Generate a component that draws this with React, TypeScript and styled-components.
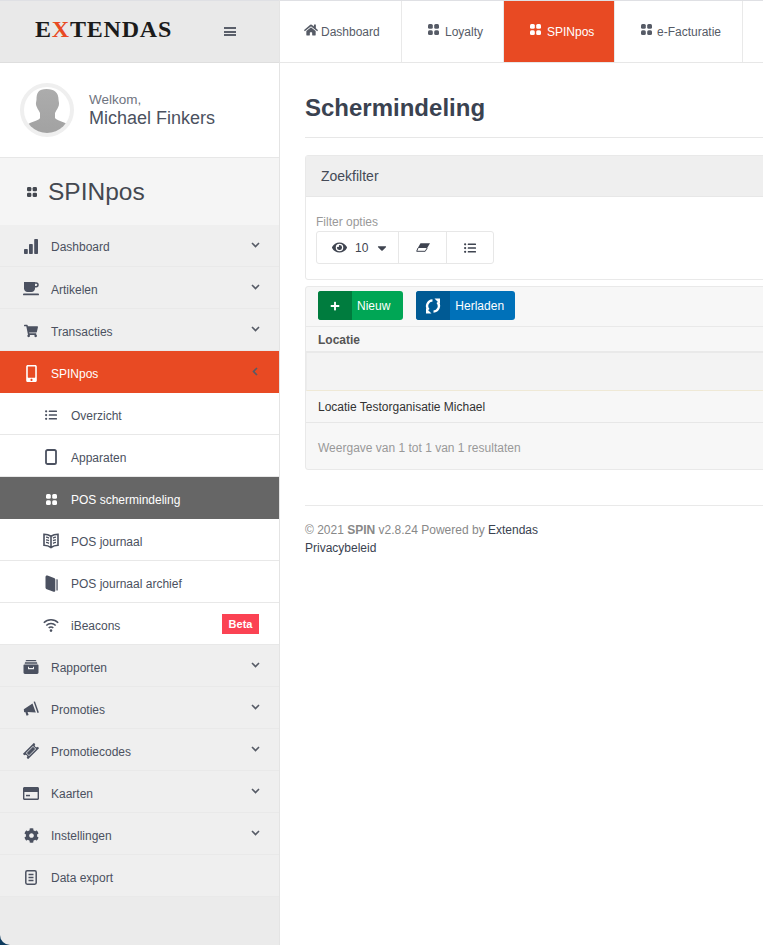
import React from "react";
import styled, { createGlobalStyle } from "styled-components";
import {
  FaHome,
  FaShoppingCart,
  FaMobileAlt,
  FaListUl,
  FaCog,
  FaEye,
  FaPlus,
  FaCaretDown,
} from "react-icons/fa";

const GlobalStyle = createGlobalStyle`
  html, body {
    margin: 0;
    padding: 0;
    background: #fff;
    overflow: hidden;
  }
  * { box-sizing: border-box; }
  body {
    font-family: "Liberation Sans", Arial, sans-serif;
    font-size: 12px;
    color: #4b5160;
  }
`;

const Page = styled.div`
  width: 763px;
  height: 945px;
  display: grid;
  grid-template-columns: 280px 1fr;
  overflow: hidden;
  background: #fff;
`;

const SideCorner = styled.div`
  background: #0d3b5e;
  height: 945px;
`;

const Side = styled.aside`
  height: 945px;
  background: #ebebeb;
  border-right: 1px solid #e4e4e4;
  border-bottom-left-radius: 10px;
  overflow: hidden;
`;

const Brand = styled.div`
  height: 63px;
  padding: 1px 0 0 35px;
  display: flex;
  align-items: center;
  background: #e9e9e9;
  border-top: 1px solid #dfe0e4;
  border-bottom: 1px solid #dedede;
`;

const Logo = styled.span`
  font-family: "Liberation Serif", serif;
  font-weight: 700;
  font-size: 24px;
  letter-spacing: 0.8px;
  color: #1b1b1b;
  width: 189px;
  margin-top: -6px;
  b { color: #e84a23; font-weight: 700; }
`;

const Burger = styled.span`
  display: block;
  width: 12px;
  height: 9px;
  margin-top: -1px;
  border-top: 2px solid #5a5f6a;
  border-bottom: 2px solid #5a5f6a;
  position: relative;
  &::after {
    content: "";
    position: absolute;
    left: 0;
    right: 0;
    top: 1.5px;
    height: 2px;
    background: #5a5f6a;
  }
`;

const Profile = styled.div`
  height: 95px;
  background: #fff;
  border-bottom: 1px solid #e7e7e7;
  padding: 20px 0 0 20px;
  display: flex;
  gap: 15px;
`;

const Avatar = styled.div`
  width: 54px;
  height: 54px;
  border-radius: 50%;
  border: 4px solid #efefef;
  background: #fff;
  overflow: hidden;
  svg { display: block; }
`;

const Greeting = styled.div`
  padding-top: 9px;
  font-size: 13.5px;
  line-height: 15px;
  color: #6f7480;
  strong {
    display: block;
    font-weight: 400;
    font-size: 18px;
    line-height: 22px;
    color: #4b5160;
  }
`;

const SectionTitle = styled.div`
  height: 67px;
  background: #f5f5f5;
  display: flex;
  align-items: center;
  gap: 11px;
  padding-left: 27px;
  font-size: 24.5px;
  color: #444850;
`;

const Menu = styled.nav`
  display: flex;
  flex-direction: column;
`;

type RowKind = "main" | "open" | "sub" | "current";

const rowBg: Record<RowKind, string> = {
  main: "#efefef",
  open: "#e84a23",
  sub: "#fff",
  current: "#666",
};

const Row = styled.div<{ $kind: RowKind }>`
  height: 42px;
  display: flex;
  align-items: center;
  padding-top: 4px;
  padding-left: ${(p) => (p.$kind === "main" || p.$kind === "open" ? "21px" : "41px")};
  padding-right: 19px;
  background: ${(p) => rowBg[p.$kind]};
  color: ${(p) => (p.$kind === "open" || p.$kind === "current" ? "#fff" : "#4b5160")};
  border-bottom: 1px solid ${(p) => (p.$kind === "main" ? "#e9e9e9" : p.$kind === "sub" ? "#e8e8e8" : "transparent")};
  &:first-child { padding-top: 3px; }
`;

const RowIcon = styled.span`
  width: 20px;
  margin-right: 10px;
  margin-top: -1px;
  flex: none;
  display: flex;
  align-items: center;
  justify-content: center;
  svg { display: block; }
`;

const RowLabel = styled.span`
  flex: 1;
`;

const Chevron = styled.svg`
  width: 9px;
  height: 6px;
  margin-top: -5px;
  fill: none;
  stroke: #565b66;
  stroke-width: 1.6;
`;

const ChevronLeft = styled.svg`
  width: 6px;
  height: 9px;
  margin: -4px 2px 0 0;
  fill: none;
  stroke: #565b66;
  stroke-width: 1.6;
`;

const Badge = styled.span`
  width: 37px;
  height: 20px;
  margin: -3px 1px 0 0;
  background: #fb4253;
  color: #fff;
  font-weight: 700;
  font-size: 11px;
  display: flex;
  align-items: center;
  justify-content: center;
`;

const Main = styled.main`
  min-width: 0;
`;

const TopBar = styled.div`
  height: 63px;
  display: flex;
  background: #fff;
  border-top: 1px solid #dfe0e4;
  border-bottom: 1px solid #e7e7e7;
`;

const Tab = styled.div<{ $active?: boolean; $width: number; $inset: number; $gap: number }>`
  width: ${(p) => p.$width}px;
  padding-left: ${(p) => p.$inset}px;
  flex: none;
  display: flex;
  align-items: center;
  gap: ${(p) => p.$gap}px;
  background: ${(p) => (p.$active ? "#e84a23" : "#fff")};
  color: ${(p) => (p.$active ? "#fff" : "#565b66")};
  border-right: 1px solid #e9e9e9;
  svg { display: block; margin-top: -4px; }
`;

const Content = styled.div`
  padding-left: 25px;
`;

const PageTitle = styled.h1`
  margin: 0;
  height: 75px;
  padding-top: 31px;
  font-size: 24px;
  line-height: 28px;
  font-weight: 700;
  color: #3a4250;
  border-bottom: 1px solid #e7e7e7;
`;

const FilterPanel = styled.section`
  width: 520px;
  height: 125px;
  margin-top: 17px;
  border: 1px solid #e9e9e9;
  border-radius: 3px;
`;

const PanelHead = styled.div`
  height: 41px;
  padding-left: 15px;
  display: flex;
  align-items: center;
  background: #efefef;
  border-bottom: 1px solid #e7e7e7;
  font-size: 14px;
  color: #444a56;
`;

const FilterBody = styled.div`
  padding: 18px 10px 0;
`;

const FieldLabel = styled.div`
  font-size: 12px;
  line-height: 14px;
  margin-bottom: 2px;
  color: #999;
`;

const ButtonGroup = styled.div`
  display: inline-flex;
  height: 33px;
  border: 1px solid #e7e7e7;
  border-radius: 3px;
`;

const GroupButton = styled.div<{ $width: number }>`
  width: ${(p) => p.$width}px;
  display: flex;
  align-items: center;
  justify-content: center;
  gap: 7px;
  font-size: 12px;
  color: #3f4450;
  & + & { border-left: 1px solid #e7e7e7; }
`;

const SizeButton = styled(GroupButton)`
  justify-content: flex-start;
  gap: 8px;
  padding: 1px 0 0 15px;
  svg:first-child { margin-top: -2px; }
  svg:last-child { margin-left: -1px; }
`;

const TablePanel = styled.section`
  width: 520px;
  height: 184px;
  margin-top: 6px;
  background: #f7f7f7;
  border: 1px solid #e9e9e9;
  border-radius: 3px;
`;

const Toolbar = styled.div`
  height: 40px;
  padding: 4px 12px 0;
  display: flex;
  gap: 13px;
  align-items: flex-start;
  border-bottom: 1px solid #e9e9e9;
`;

const ActionButton = styled.div<{ $dark: string; $light: string; $pad: number }>`
  height: 29px;
  display: flex;
  border-radius: 3px;
  overflow: hidden;
  background: ${(p) => p.$light};
  color: #fff;
  font-size: 12px;
  align-items: center;
  padding-right: ${(p) => p.$pad}px;
  gap: 5px;
  > i {
    width: 34px;
    height: 100%;
    display: flex;
    align-items: center;
    justify-content: center;
    background: ${(p) => p.$dark};
  }
`;

const HeadRow = styled.div`
  height: 26px;
  padding: 2px 0 0 12px;
  display: flex;
  align-items: center;
  font-weight: 700;
  color: #555;
  border-bottom: 2px solid #e9e9e9;
`;

const FilterRow = styled.div`
  height: 38px;
  background: #f3f3f3;
  border-left: 1px solid #ececec;
  border-bottom: 1px solid #efe9d6;
`;

const DataRow = styled.div`
  height: 32px;
  padding-left: 12px;
  display: flex;
  align-items: center;
  color: #333;
  border-bottom: 1px solid #e7e7e7;
`;

const ResultCount = styled.div`
  height: 46px;
  padding: 3px 0 0 12px;
  display: flex;
  align-items: center;
  color: #999;
`;

const Footer = styled.footer`
  margin-top: 35px;
  padding-top: 16px;
  border-top: 1px solid #e9e9e9;
  line-height: 17.5px;
  color: #888;
  b { color: #888; }
  span { color: #3a4250; }
`;

const GridIcon = ({ size = 11 }: { size?: number }) => (
  <svg width={size} height={size} viewBox="0 0 11 11" fill="currentColor">
    <rect x="0" y="0" width="4.8" height="4.8" rx="1.5" />
    <rect x="6.2" y="0" width="4.8" height="4.8" rx="1.5" />
    <rect x="0" y="6.2" width="4.8" height="4.8" rx="1.5" />
    <rect x="6.2" y="6.2" width="4.8" height="4.8" rx="1.5" />
  </svg>
);

const BarsIcon = () => (
  <svg width="14" height="15" viewBox="0 0 14 15" fill="currentColor">
    <rect x="0" y="10" width="3.8" height="5" rx="0.8" />
    <rect x="5" y="5" width="3.8" height="10" rx="0.8" />
    <rect x="10.2" y="0" width="3.8" height="15" rx="0.8" />
  </svg>
);

const CupIcon = () => (
  <svg width="16" height="14" viewBox="0 0 16 14" fill="currentColor">
    <path d="M1 0h11v6.500C12 8.400 10.400 10 8.500 10h-4C2.600 10 1 8.400 1 6.500z" />
    <path fill="none" stroke="currentColor" strokeWidth="1.500" d="M12 1h1.200c1 0 1.800.8 1.800 1.800s-.8 1.900-1.800 1.900H12" />
    <rect x="0" y="11.500" width="16" height="1.800" rx="0.9" />
  </svg>
);

const TabletIcon = () => (
  <svg width="12" height="16" viewBox="0 0 12 16" fill="none" stroke="currentColor" strokeWidth="1.8">
    <rect x="1" y="1" width="10" height="14" rx="1.6" />
  </svg>
);

const OpenBookIcon = () => (
  <svg width="16" height="16" viewBox="0 0 16 16" fill="none" stroke="currentColor" strokeWidth="1.3">
    <path strokeWidth="1.6" d="M8 3.2C6 2 3.5 1.4 1 1.3v11c2.5.1 5 .8 7 2.2 2-1.4 4.5-2.1 7-2.2v-11C12.500 1.400 10 2 8 3.200zM8 3.200v11.300" />
    <path d="M3 4.200c1 .1 2 .4 3 .9M3 6.800c1 .1 2 .4 3 .9M3 9.400c1 .1 2 .4 3 .9M13 4.200c-1 .1-2 .4-3 .9M13 6.800c-1 .1-2 .4-3 .9M13 9.400c-1 .1-2 .4-3 .9" />
  </svg>
);

const ClosedBookIcon = () => (
  <svg width="13" height="17" viewBox="0 0 13 17" fill="currentColor">
    <path d="M.5 2C.5.8 1.400.2 2.500.6L9 3c.9.3 1.300.9 1.300 1.800v10.700c0 1-.7 1.500-1.700 1.200L1.800 14.300C1 14 .5 13.500.5 12.600z" />
    <path d="M11.400 4.200h.7c.4 0 .6.3.6.6v10.700h-1.300z" />
  </svg>
);

const WifiIcon = () => (
  <svg width="16" height="14" viewBox="0 0 16 14" fill="none" stroke="currentColor" strokeWidth="1.5">
    <path d="M.8 4.800a10.200 10.200 0 0 1 14.400 0M3.300 7.500a6.600 6.600 0 0 1 9.400 0M5.700 10a3.200 3.200 0 0 1 4.600 0" />
    <circle cx="8" cy="12.600" r="1.300" fill="currentColor" stroke="none" />
  </svg>
);

const TrayIcon = () => (
  <svg width="16" height="14" viewBox="0 0 16 14" fill="currentColor">
    <path d="M3.500 0h9c.4 0 .7.3.8.7l.1.6H2.600l.1-.6c.1-.4.4-.7.8-.7zM2 2.300h12l.3 1.500H1.700z" />
    <path
      fillRule="evenodd"
      d="M1.500 4.600h13c.6 0 1 .4 1 1v7c0 .8-.6 1.400-1.400 1.400H1.900C1.100 14 .5 13.400.5 12.600v-7c0-.6.400-1 1-1zM5 6.800v2.400h6V6.800h-1v1.300H6V6.800z"
    />
  </svg>
);

const HornIcon = () => (
  <svg width="16" height="16" viewBox="0 0 16 16" fill="currentColor">
    <path d="M.8 8.200L9.500 2.400l3.300 9-8.200-.4 1 3-2 .7-1.300-3.800-1.200.4z" />
    <path d="M10.600.8l1.400-.4 3.900 11.100-1.400.5z" />
  </svg>
);

const TicketIcon = () => (
  <svg width="16" height="16" viewBox="0 0 16 16" fill="currentColor">
    <g transform="rotate(-45 8 8)">
      <path fillRule="evenodd" d="M.2 4.300h15.600v2a1.700 1.700 0 0 0 0 3.400v2H.2v-2a1.700 1.700 0 0 0 0-3.400zM3 5.800v4.400h10V5.800z" />
      <rect x="3.600" y="6.400" width="8.800" height="3.200" />
    </g>
  </svg>
);

const CardIcon = () => (
  <svg width="16" height="13" viewBox="0 0 16 13" fill="currentColor">
    <path
      fillRule="evenodd"
      d="M1.500 0h13c.8 0 1.500.7 1.500 1.500v10c0 .8-.7 1.500-1.500 1.500h-13C.7 13 0 12.300 0 11.500v-10C0 .7.700 0 1.500 0zM1.400 5v6.200c0 .2.200.4.400.4h12.400c.2 0 .4-.2.400-.4V5z"
    />
    <rect x="3" y="7.800" width="4" height="1.500" />
  </svg>
);

const DocIcon = () => (
  <svg width="12" height="15" viewBox="0 0 12 15" fill="none" stroke="currentColor" strokeWidth="1.500">
    <rect x=".8" y=".8" width="10.400" height="13.400" rx="1.400" />
    <path d="M3.500 4.500h5M3.500 7.500h5M3.500 10.500h5" />
  </svg>
);

const EraserIcon = () => (
  <svg width="14" height="9" viewBox="0 0 14 9">
    <path fill="currentColor" d="M4.500.3H14L11.200 5H1.800z" />
    <path fill="none" stroke="currentColor" d="M2 5L.7 8.300h8.500L11.200 5" />
  </svg>
);

const RefreshIcon = () => (
  <svg width="16" height="16" viewBox="0 0 16 16" fill="none" stroke="currentColor" strokeWidth="2.400">
    <path d="M7.500 2.400A5.600 5.600 0 0 0 3.600 11.800" />
    <path d="M8.500 13.600A5.600 5.600 0 0 0 12.400 4.200" />
    <path fill="currentColor" stroke="none" d="M9.500.5h5.500V6zM6.500 15.500H1V10z" />
  </svg>
);

type Item = { label: string; icon: React.ReactNode; kind: RowKind; chevron?: boolean; badge?: string };

const items: Item[] = [
  { label: "Dashboard", icon: <BarsIcon />, kind: "main", chevron: true },
  { label: "Artikelen", icon: <CupIcon />, kind: "main", chevron: true },
  { label: "Transacties", icon: <FaShoppingCart size={14} />, kind: "main", chevron: true },
  { label: "SPINpos", icon: <FaMobileAlt size={17} />, kind: "open" },
  { label: "Overzicht", icon: <FaListUl size={12} />, kind: "sub" },
  { label: "Apparaten", icon: <TabletIcon />, kind: "sub" },
  { label: "POS schermindeling", icon: <GridIcon />, kind: "current" },
  { label: "POS journaal", icon: <OpenBookIcon />, kind: "sub" },
  { label: "POS journaal archief", icon: <ClosedBookIcon />, kind: "sub" },
  { label: "iBeacons", icon: <WifiIcon />, kind: "sub", badge: "Beta" },
  { label: "Rapporten", icon: <TrayIcon />, kind: "main", chevron: true },
  { label: "Promoties", icon: <HornIcon />, kind: "main", chevron: true },
  { label: "Promotiecodes", icon: <TicketIcon />, kind: "main", chevron: true },
  { label: "Kaarten", icon: <CardIcon />, kind: "main", chevron: true },
  { label: "Instellingen", icon: <FaCog size={15} />, kind: "main", chevron: true },
  { label: "Data export", icon: <DocIcon />, kind: "main" },
];

const tabs = [
  { label: "Dashboard", width: 122, inset: 24, gap: 3, icon: <FaHome size={14} /> },
  { label: "Loyalty", width: 102, inset: 26, gap: 6, icon: <GridIcon /> },
  { label: "SPINpos", width: 111, inset: 26, gap: 6, icon: <GridIcon />, active: true },
  { label: "e-Facturatie", width: 128, inset: 26, gap: 5, icon: <GridIcon /> },
];

const App = () => {
  return (
    <>
      <GlobalStyle />
      <Page>
        <SideCorner>
          <Side>
            <Brand>
              <Logo>
                E<b>X</b>TENDAS
              </Logo>
              <Burger />
            </Brand>
            <Profile>
              <Avatar>
                <svg width="46" height="46" viewBox="0 0 46 46">
                  <defs>
                    <linearGradient id="silhouette" x1="0" y1="0" x2="0" y2="1">
                      <stop offset="0" stopColor="#acacac" />
                      <stop offset="1" stopColor="#a2a2a2" />
                    </linearGradient>
                  </defs>
                  <path
                    fill="url(#silhouette)"
                    d="M22.500 2c8 0 12 4 12 10.500 0 2 1 3 .3 6-.5 2-2.300 4.500-3.800 7.500v5c2 2.500 9 3.500 13 7l1 8H1l2-8c4-3.500 12-4.500 13-7v-5c-1.500-3-3.300-5.500-3.800-7.500-.7-3 .3-4 .3-6C12.500 6 14.500 2 22.500 2z"
                  />
                </svg>
              </Avatar>
              <Greeting>
                Welkom,
                <strong>Michael Finkers</strong>
              </Greeting>
            </Profile>
            <SectionTitle>
              <GridIcon size={10} />
              SPINpos
            </SectionTitle>
            <Menu>
              {items.map((item) => (
                <Row key={item.label} $kind={item.kind}>
                  <RowIcon>{item.icon}</RowIcon>
                  <RowLabel>{item.label}</RowLabel>
                  {item.chevron && (
                    <Chevron viewBox="0 0 9 6">
                      <path d="M1 1l3.500 3.500L8 1" />
                    </Chevron>
                  )}
                  {item.kind === "open" && (
                    <ChevronLeft viewBox="0 0 6 9">
                      <path d="M5 1L1.500 4.500 5 8" />
                    </ChevronLeft>
                  )}
                  {item.badge && <Badge>{item.badge}</Badge>}
                </Row>
              ))}
            </Menu>
          </Side>
        </SideCorner>
        <Main>
          <TopBar>
            {tabs.map((tab) => (
              <Tab key={tab.label} $width={tab.width} $inset={tab.inset} $gap={tab.gap} $active={tab.active}>
                {tab.icon}
                {tab.label}
              </Tab>
            ))}
          </TopBar>
          <Content>
            <PageTitle>Schermindeling</PageTitle>
            <FilterPanel>
              <PanelHead>Zoekfilter</PanelHead>
              <FilterBody>
                <FieldLabel>Filter opties</FieldLabel>
                <ButtonGroup>
                  <SizeButton $width={81}>
                    <FaEye size={15} />
                    10
                    <FaCaretDown size={14} />
                  </SizeButton>
                  <GroupButton $width={48}>
                    <EraserIcon />
                  </GroupButton>
                  <GroupButton $width={47}>
                    <FaListUl size={12} />
                  </GroupButton>
                </ButtonGroup>
              </FilterBody>
            </FilterPanel>
            <TablePanel>
              <Toolbar>
                <ActionButton $dark="#007c3e" $light="#00a655" $pad={13}>
                  <i>
                    <FaPlus size={10} />
                  </i>
                  Nieuw
                </ActionButton>
                <ActionButton $dark="#005a94" $light="#0071b9" $pad={11}>
                  <i>
                    <RefreshIcon />
                  </i>
                  Herladen
                </ActionButton>
              </Toolbar>
              <HeadRow>Locatie</HeadRow>
              <FilterRow />
              <DataRow>Locatie Testorganisatie Michael</DataRow>
              <ResultCount>Weergave van 1 tot 1 van 1 resultaten</ResultCount>
            </TablePanel>
            <Footer>
              © 2021 <b>SPIN</b> v2.8.24 Powered by <span>Extendas</span>
              <br />
              <span>Privacybeleid</span>
            </Footer>
          </Content>
        </Main>
      </Page>
    </>
  );
};

export default App;
